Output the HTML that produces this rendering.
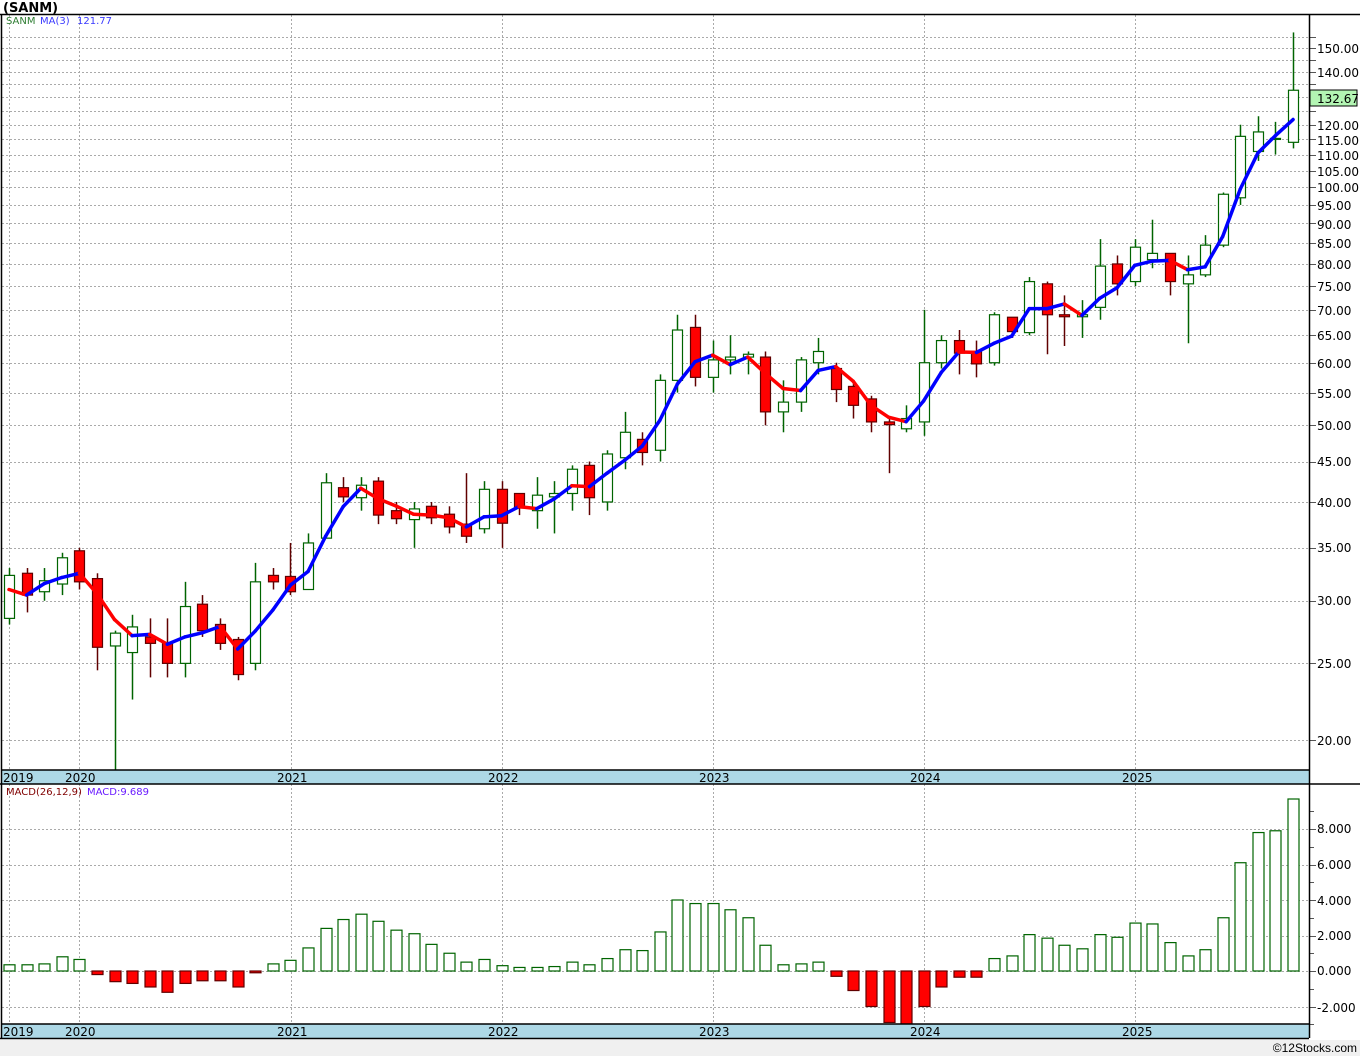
<!DOCTYPE html>
<html><head><meta charset="utf-8"><style>
body{margin:0;width:1360px;height:1056px;background:#fff;overflow:hidden;font-family:"Liberation Sans",sans-serif}
svg{position:absolute;left:0;top:0}
text{font-family:"DejaVu Sans","Liberation Sans",sans-serif}
</style></head><body>
<svg id="s" width="1360" height="1056" xmlns="http://www.w3.org/2000/svg">
<defs><clipPath id="cp"><rect x="2" y="15" width="1307" height="755"/></clipPath><clipPath id="cm"><rect x="2" y="785" width="1307" height="239"/></clipPath></defs>
<rect x="0" y="1040" width="1360" height="16" fill="#f0f0f0"/>
<text x="3" y="12" font-size="13" font-weight="bold" fill="#000">(SANM)</text>
<g id="grid"></g>
<rect x="2" y="770" width="1307" height="14" fill="#add8e6"/>
<rect x="2" y="1024" width="1307" height="14" fill="#add8e6"/>
<g font-size="12" fill="#000">
<text x="3" y="782">2019</text><text x="65" y="782">2020</text><text x="277" y="782">2021</text><text x="488" y="782">2022</text><text x="699" y="782">2023</text><text x="910" y="782">2024</text><text x="1122" y="782">2025</text>
<text x="3" y="1036">2019</text><text x="65" y="1036">2020</text><text x="277" y="1036">2021</text><text x="488" y="1036">2022</text><text x="699" y="1036">2023</text><text x="910" y="1036">2024</text><text x="1122" y="1036">2025</text>
</g>
<g id="plot" clip-path="url(#cp)"></g>
<g id="mplot" clip-path="url(#cm)"></g>
<g fill="none" stroke="#000" stroke-width="1.5">
<line x1="0" y1="14.5" x2="1360" y2="14.5"/>
<line x1="1309.5" y1="14" x2="1309.5" y2="1038"/>
<line x1="2" y1="770" x2="1309" y2="770"/><line x1="0" y1="784" x2="1360" y2="784"/>
<line x1="2" y1="1024" x2="1309" y2="1024"/><line x1="0" y1="1038.5" x2="1309" y2="1038.5"/>
<line x1="1.5" y1="14" x2="1.5" y2="1038"/>
</g>
<g id="labels" font-size="12" fill="#000">
<text x="1317" y="53">150.00</text><text x="1317" y="77">140.00</text><text x="1317" y="130">120.00</text><text x="1317" y="145">115.00</text><text x="1317" y="160">110.00</text><text x="1317" y="192">100.00</text><text x="1317" y="176">105.00</text>
<text x="1317" y="210">95.00</text><text x="1317" y="229">90.00</text><text x="1317" y="248">85.00</text><text x="1317" y="269">80.00</text><text x="1317" y="291">75.00</text><text x="1317" y="315">70.00</text><text x="1317" y="340">65.00</text><text x="1317" y="368">60.00</text><text x="1317" y="398">55.00</text><text x="1317" y="430">50.00</text><text x="1317" y="466">45.00</text><text x="1317" y="507">40.00</text><text x="1317" y="552">35.00</text><text x="1317" y="605">30.00</text><text x="1317" y="668">25.00</text><text x="1317" y="745">20.00</text>
<text x="1317" y="833">8.000</text><text x="1317" y="869">6.000</text><text x="1317" y="905">4.000</text><text x="1317" y="940">2.000</text><text x="1317" y="975">0.000</text><text x="1317" y="1012">-2.000</text>
</g>
<rect x="1310" y="90" width="47" height="16" fill="#b3f5b3" stroke="#000"/>
<text x="1317" y="103" font-size="12">132.67</text>
<text x="6" y="24" font-size="10" fill="#2e7d32">SANM</text><text x="40" y="24" font-size="10" fill="#3a3aff">MA(3)</text><text x="77" y="24" font-size="10" fill="#3a3aff">121.77</text>
<text x="6" y="795" font-size="10" fill="#800000">MACD(26,12,9)</text><text x="87" y="795" font-size="10" fill="#6a1bff">MACD:9.689</text>
<text x="1357" y="1052" font-size="12" fill="#000" text-anchor="end" style="font-family:'Liberation Sans',sans-serif">©12Stocks.com</text>
</svg>
<script>
var NS="http://www.w3.org/2000/svg";
function el(p,t,a){var e=document.createElementNS(NS,t);for(var k in a)e.setAttribute(k,a[k]);p.appendChild(e);return e;}
function Y(p){return 740-343.4*Math.log(p/20);}
function M(v){return 971-17.75*v;}
var g=document.getElementById('grid'),pl=document.getElementById('plot'),mp=document.getElementById('mplot');
var dash={stroke:"#aaa","stroke-width":1,"stroke-dasharray":"2,2"};
for(var p=20;p<=155;p+=5){var y=Math.round(Y(p))+.5;el(g,'line',Object.assign({x1:2,x2:1309,y1:y,y2:y},dash));el(g,'line',{x1:1309,x2:1316,y1:y,y2:y,stroke:"#555"});}
for(var v=-2;v<=8;v+=2){var y=Math.round(M(v))+.5;el(g,'line',Object.assign({x1:2,x2:1309,y1:y,y2:y},dash));el(g,'line',{x1:1309,x2:1316,y1:y,y2:y,stroke:"#555"});}
for(var v=-3;v<=10;v+=2){var y=Math.round(M(v))+.5;el(g,'line',{x1:1309,x2:1314,y1:y,y2:y,stroke:"#555"});}
[9,79,291,502,713,924,1135].forEach(function(x){el(g,'line',Object.assign({x1:x+.5,x2:x+.5,y1:15,y2:770},dash));el(g,'line',Object.assign({x1:x+.5,x2:x+.5,y1:784,y2:1024},dash));});
var D=[[28.5,32.3,33,28],[32.5,30.5,33,29],[30.8,31.8,33,30],[31.5,34,34.5,30.5],[34.7,31.7,35,31],[32,26.2,32.5,24.5],[26.3,27.3,27.5,17],[25.8,27.8,28.8,22.5],[27,26.5,28.5,24],[26.5,25,28.5,24],[25,29.5,31.7,24],[29.7,27.5,30.5,27],[28,26.5,28.5,26],[26.8,24.2,27,23.8],[25,31.7,33.5,24.5],[32.3,31.7,33,31],[32.2,30.8,35.5,30.5],[31,35.5,36.5,31],[36,42.3,43.5,36],[41.7,40.6,43,40],[40.5,42,43,39],[42.5,38.5,43,37.5],[39,38.1,40,37.5],[38,39.2,40,35],[39.5,38.2,40,37.5],[38.6,37.2,39.5,36.5],[37.5,36.2,43.5,35.5],[37,41.5,42.5,36.5],[41.5,37.6,42.5,35],[41,39.3,41,38.5],[39,40.8,43,37],[40.6,41,42.5,36.5],[41,44,44.5,39],[44.5,40.5,45,38.5],[40,46,46.5,39],[45.5,49,52,44],[48,46.2,49,44.5],[46.5,57,58,45],[57,66,69,55],[66.5,57.5,69,56],[57.5,60.5,64,55],[60.5,61,65,58],[61,61.5,62,58],[61,52,62,50],[52,53.5,57,49],[53.5,60.5,61,52],[60,62,64.5,58],[59,55.5,60,53.5],[56,53,57,51],[54,50.5,54.5,49],[50.5,50.1,51,43.5],[49.5,51,53,49],[50.5,60,70,48.5],[60,64,65,59],[64,61.7,66,58],[62,59.8,64,57.5],[60,69,69.5,59.5],[68.5,65.7,68.5,64.5],[65.5,76,77,65],[75.5,69,76,61.5],[69,68.6,73,63],[68.6,69,72,64.5],[70.5,79.5,86,68],[80,75.5,82,73],[76,84,86,75],[81,82.5,91,79],[82.5,76,82,73],[75.5,77.5,82,63.5],[77.5,84.5,87,77],[84.5,98,98.5,84],[97,116,120,95],[111,117.5,123,108],[115,115.3,121,110],[114,132.67,157,112]];
var MV=[.35,.35,.4,.8,.65,-.2,-.6,-.7,-.9,-1.2,-.7,-.55,-.55,-.9,-.1,.4,.6,1.3,2.4,2.9,3.2,2.8,2.3,2.1,1.5,1.0,.5,.65,.3,.2,.2,.25,.5,.35,.7,1.2,1.15,2.2,4.0,3.8,3.8,3.45,3.0,1.45,.35,.4,.5,-.3,-1.1,-2.0,-2.9,-3.1,-2.0,-.9,-.35,-.35,.7,.85,2.05,1.85,1.45,1.25,2.05,1.9,2.7,2.65,1.6,.85,1.2,3.0,6.1,7.8,7.9,9.69];
function X(i){return 9+17.59*i;}
D.forEach(function(d,i){var x=Math.round(X(i));var up=d[1]>=d[0];var col=up?"#006400":"#600000";
 var top=Y(Math.max(d[0],d[1])),bot=Y(Math.min(d[0],d[1]));if(bot-top<1)bot=top+1;
 el(pl,'line',{x1:x+.5,x2:x+.5,y1:Y(d[2]),y2:top,stroke:col,"stroke-width":1.5});
 el(pl,'line',{x1:x+.5,x2:x+.5,y1:bot,y2:Y(d[3]),stroke:col,"stroke-width":1.5});
 el(pl,'rect',{x:x-4.5,y:top,width:10,height:bot-top,fill:up?"#fff":"#ff0000",stroke:col,"stroke-width":1.2});
 var v=MV[i];var y0=971,y1=M(v);
 el(mp,'rect',{x:x-5,y:Math.min(y0,y1),width:11,height:Math.max(1,Math.abs(y1-y0)),fill:v>=0?"#fff":"#ff0000",stroke:v>=0?"#006400":"#600000","stroke-width":1.2});
});
var C=D.map(function(d){return d[1];});var ma=[];C.forEach(function(c,i){if(i<2)ma.push(i==0?31:30.5);else ma.push((C[i]+C[i-1]+C[i-2])/3);});
for(var i=1;i<ma.length;i++){el(pl,'line',{x1:X(i-1),y1:Y(ma[i-1]),x2:X(i),y2:Y(ma[i]),stroke:ma[i]>=ma[i-1]?"#0000ff":"#ff0000","stroke-width":3.5,"stroke-linecap":"round"});}
</script>
</body></html>
